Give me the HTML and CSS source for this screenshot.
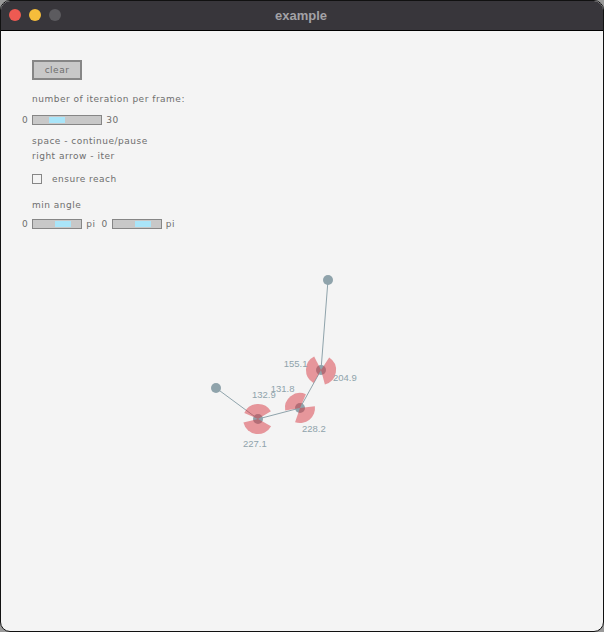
FILE: index.html
```html
<!DOCTYPE html>
<html>
<head>
<meta charset="utf-8">
<link rel="stylesheet" href="styles.css">
</head>
<body>
<div class="window">
  <div class="titlebar">
    <div class="lights">
      <span class="light red"></span>
      <span class="light yellow"></span>
      <span class="light gray"></span>
    </div>
    <div class="title">example</div>
  </div>
  <div class="content">
    <div class="btn">clear</div>
    <div class="label first">number of iteration per frame:</div>
    <div class="slider-row r1">
      <span class="num">0</span>
      <span class="slider" style="width:70px"><span class="knob" style="left:16px"></span></span>
      <span class="num">30</span>
    </div>
    <div class="label lines">space - continue/pause</div>
    <div class="label">right arrow - iter</div>
    <div class="check-row">
      <span class="box"></span>
      <span class="label">ensure reach</span>
    </div>
    <div class="label angle">min angle</div>
    <div class="slider-row r2">
      <span class="num">0</span>
      <span class="slider" style="width:50px"><span class="knob" style="left:22px"></span></span>
      <span class="num">pi</span>
      <span class="num zero2">0</span>
      <span class="slider" style="width:50px"><span class="knob" style="left:22px"></span></span>
      <span class="num">pi</span>
    </div>
  </div>
  <svg class="canvas" width="602" height="630" viewBox="1 1 602 630" xmlns="http://www.w3.org/2000/svg">
    <g stroke="#8fa3ab" stroke-width="1" fill="none">
      <polyline points="328,280 321,370 300,408 258,419 216,388"/>
    </g>
    <g fill="#8fa3ab">
      <circle cx="328" cy="280" r="5"/>
      <circle cx="216" cy="388" r="5"/>
      <circle cx="321" cy="370" r="5"/>
      <circle cx="300" cy="408" r="5"/>
      <circle cx="258" cy="419" r="5"/>
    </g>
    <g fill="rgba(216,56,66,0.5)">
      <path d="M321,370 L313.5,383 A15,15 0 0 1 314.2,356.6 Z"/>
      <path d="M321,370 L329.2,357.4 A15,15 0 0 1 324.9,384.5 Z"/>
      <path d="M300,408 L285.2,410.6 A15,15 0 0 1 305.9,394.2 Z"/>
      <path d="M300,408 L314.9,406.2 A15,15 0 0 1 295.1,422.2 Z"/>
      <path d="M258,419 L244.3,412.9 A15,15 0 0 1 270.9,411.3 Z"/>
      <path d="M258,419 L271.1,426.3 A15,15 0 0 1 243.4,422.6 Z"/>
    </g>
    <g class="nums" fill="#8fa3ab">
      <text x="307.5" y="366.5" text-anchor="end">155.1</text>
      <text x="333" y="380.5">204.9</text>
      <text x="294.5" y="391.5" text-anchor="end">131.8</text>
      <text x="252" y="397.5">132.9</text>
      <text x="302" y="431.5">228.2</text>
      <text x="243" y="446.5">227.1</text>
    </g>
  </svg>
</div>
</body>
</html>
```

FILE: styles.css
```css
html, body {
  margin: 0;
  padding: 0;
  background: #9a9a9a;
}
body {
  width: 604px;
  height: 632px;
  overflow: hidden;
}
.window {
  position: relative;
  width: 604px;
  height: 632px;
  box-sizing: border-box;
  border: 1px solid #111;
  border-radius: 10px;
  overflow: hidden;
  background: #f4f4f4;
  font-family: "DejaVu Sans", sans-serif;
  color: #6e6e6e;
}
.titlebar {
  position: relative;
  height: 29px;
  background: #38363b;
  border-bottom: 1px solid #000;
  display: flex;
  align-items: center;
  justify-content: center;
}
.lights {
  position: absolute;
  left: 8px;
  top: 8px;
  display: flex;
  gap: 8px;
}
.light {
  width: 12px;
  height: 12px;
  border-radius: 50%;
}
.red { background: #ee5a52; }
.yellow { background: #f5bd3b; }
.gray { background: #5c5b5f; }
.title {
  font-family: "Liberation Sans", "DejaVu Sans", sans-serif;
  font-weight: bold;
  font-size: 13px;
  color: #a3a2a6;
  margin-left: -2px;
}
.content {
  padding: 29px 0 0 21px;
  display: flex;
  flex-direction: column;
  align-items: flex-start;
  font-size: 9px;
  letter-spacing: 0.5px;
}
.btn {
  margin-left: 10px;
  width: 50px;
  height: 20px;
  box-sizing: border-box;
  border: 2px solid #868686;
  background: #c8c8c8;
  display: flex;
  align-items: center;
  justify-content: center;
}
.label {
  line-height: 15px;
  margin-left: 10px;
}
.label.first { margin-top: 12px; }
.slider-row {
  display: flex;
  align-items: center;
  gap: 4px;
  height: 10px;
}
.r1 { margin-top: 8px; }
.r2 { margin-top: 6px; }
.slider {
  position: relative;
  height: 10px;
  box-sizing: border-box;
  border: 1px solid #868686;
  background: #c8c8c8;
}
.knob {
  position: absolute;
  top: 1px;
  width: 16px;
  height: 6px;
  background: #a9e5f9;
}
.num { line-height: 10px; }
.zero2 { margin-left: 2px; }
.lines { margin-top: 9px; }
.check-row {
  display: flex;
  align-items: center;
  margin-top: 10px;
  margin-left: 10px;
  height: 10px;
}
.check-row .label { margin-left: 10px; }
.box {
  width: 10px;
  height: 10px;
  box-sizing: border-box;
  border: 1px solid #868686;
}
.label.angle { margin-top: 14px; }
.canvas {
  position: absolute;
  left: 0;
  top: 0;
}
.nums text {
  font-family: "Liberation Sans", sans-serif;
  font-size: 9.5px;
}
```
